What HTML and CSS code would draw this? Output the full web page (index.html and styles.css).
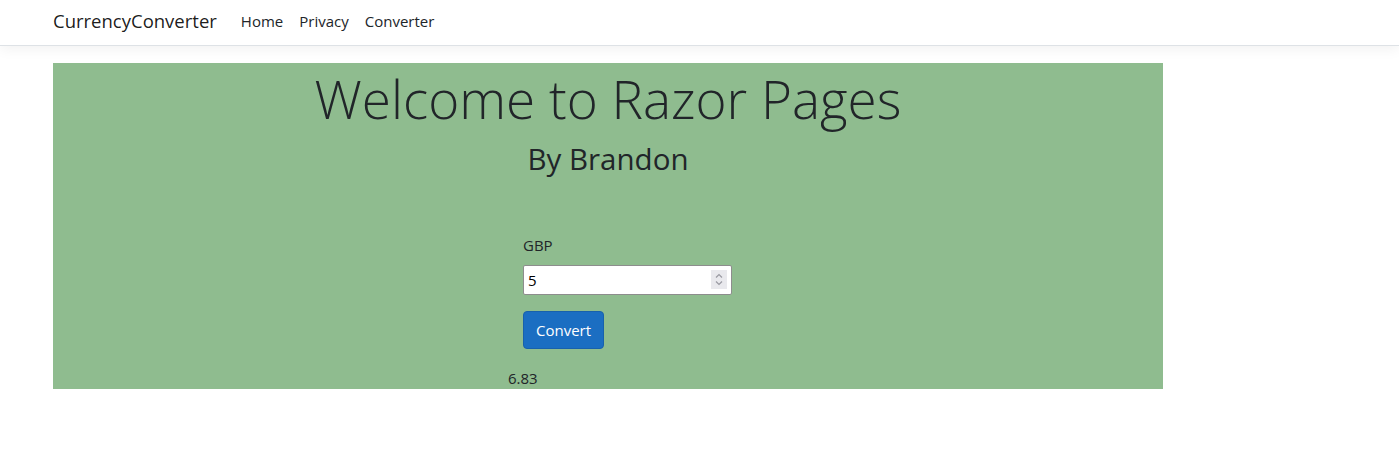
FILE: index.html
```html
<!DOCTYPE html>
<html lang="en">
<head>
<meta charset="utf-8">
<title>CurrencyConverter</title>
<link rel="stylesheet" href="styles.css">
</head>
<body>
<header class="navbar">
  <a class="brand" href="#">CurrencyConverter</a>
  <nav class="nav">
    <a class="nav-link" href="#">Home</a>
    <a class="nav-link" href="#">Privacy</a>
    <a class="nav-link" href="#">Converter</a>
  </nav>
</header>
<main class="main">
  <div class="panel">
    <h1 class="title">Welcome to Razor Pages</h1>
    <h2 class="subtitle">By Brandon</h2>
    <form class="form">
      <label class="label" for="amt">GBP</label>
      <div class="field">
        <input id="amt" class="input" type="number" value="5">
        <span class="spinner" aria-hidden="true">
          <svg width="16" height="19" viewBox="0 0 16 19">
            <path d="M5 7.5 L8 4.5 L11 7.5" fill="none" stroke="#9a9aa2" stroke-width="1.2"/>
            <path d="M5 11.5 L8 14.5 L11 11.5" fill="none" stroke="#9a9aa2" stroke-width="1.2"/>
          </svg>
        </span>
      </div>
      <button class="btn" type="button">Convert</button>
    </form>
    <div class="result">6.83</div>
  </div>
</main>
</body>
</html>
```
FILE: styles.css
```css
* { box-sizing: border-box; }
body {
  margin: 0;
  font-family: "Open Sans", "Noto Sans", sans-serif;
  font-size: 15px;
  line-height: 24px;
  color: #212529;
  background: #fff;
}
.navbar {
  display: flex;
  align-items: center;
  height: 46px;
  padding: 0 0 4px 53px;
  border-bottom: 1px solid #dee2e6;
  box-shadow: 0 4px 12px rgba(0, 0, 0, 0.05);
  background: #fff;
}
.brand {
  font-size: 18.5px;
  color: rgba(0, 0, 0, 0.9);
  text-decoration: none;
  margin-right: 16px;
}
.nav { display: flex; }
.nav-link {
  color: #212529;
  text-decoration: none;
  padding: 0 8px;
  font-size: 15px;
}
.main {
  padding: 17px 0 0 53px;
}
.panel {
  width: 1110px;
  height: 326px;
  background: #8fbc8f;
}
.title {
  margin: 0;
  font-size: 53px;
  font-weight: 300;
  line-height: 71px;
  text-align: center;
}
.subtitle {
  margin: 6px 0 0;
  font-size: 29.5px;
  font-weight: 400;
  line-height: 38px;
  text-align: center;
}
.form {
  margin: 55px 0 0 470px;
  display: flex;
  flex-direction: column;
  align-items: flex-start;
}
.label {
  display: block;
  margin-bottom: 8px;
}
.field {
  position: relative;
  margin-bottom: 16px;
}
.input {
  display: block;
  width: 209px;
  height: 30px;
  border: 1px solid #8d8d8d;
  border-radius: 2px;
  padding: 1px 4px;
  font-family: inherit;
  font-size: 15px;
  color: #000;
  background: #fff;
  -moz-appearance: textfield;
}
.input::-webkit-inner-spin-button,
.input::-webkit-outer-spin-button {
  -webkit-appearance: none;
  margin: 0;
}
.spinner {
  position: absolute;
  top: 5px;
  right: 5px;
  width: 16px;
  height: 19px;
  background: #e9e9ed;
  display: block;
}
.spinner svg { display: block; }
.btn {
  font-family: inherit;
  font-size: 15px;
  color: #fff;
  background: #1b6ec2;
  border: 1px solid #1861ac;
  border-radius: 4px;
  padding: 6px 12px;
  line-height: 24px;
}
.result {
  margin: 17px 0 0 455px;
}
```
